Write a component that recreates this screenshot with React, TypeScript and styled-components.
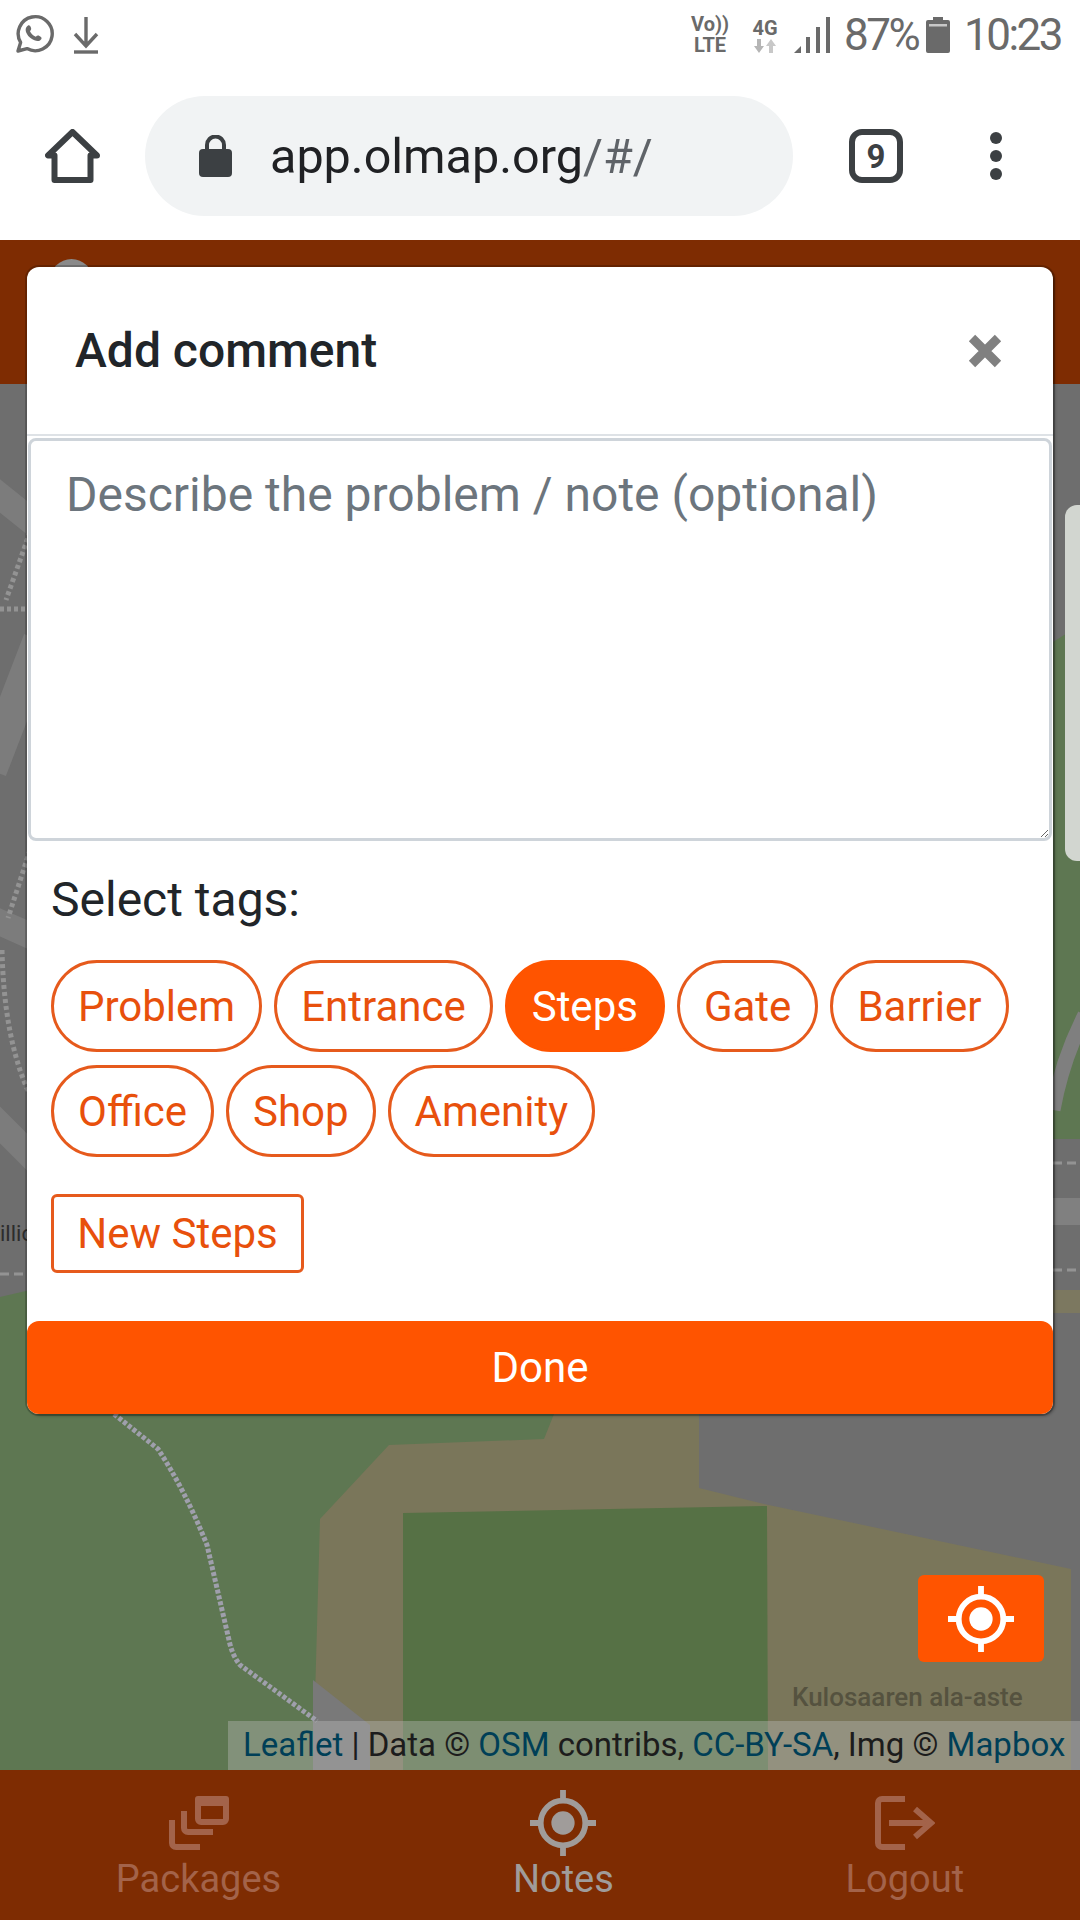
import React from "react";
import styled, {createGlobalStyle} from "styled-components";

const ORANGE = '#ff5400'
const TAGS = ['Problem', 'Entrance', 'Steps', 'Gate', 'Barrier', 'Office', 'Shop', 'Amenity']
const SELECTED_TAG = 'Steps'

const GlobalStyle = createGlobalStyle`
  html, body {
    margin: 0;
    padding: 0;
    background: #fff;
    font-family: Roboto, "Liberation Sans", sans-serif;
  }
  * {
    box-sizing: border-box;
  }
`

const Page = styled.div`
  width: 1080px;
  height: 1920px;
  display: flex;
  flex-direction: column;
  overflow: hidden;
`

const StatusBar = styled.div`
  height: 70px;
  padding: 0 18px 0 13px;
  display: flex;
  align-items: center;
  justify-content: space-between;
  color: #6a6a6a;
`

const StatusGroup = styled.div`
  display: flex;
  align-items: center;
`

const StatusText = styled.span<{$width: number}>`
  font-size: 44px;
  line-height: 70px;
  letter-spacing: -2.5px;
  width: ${props => props.$width}px;
  white-space: nowrap;
`

const NetworkBadge = styled.div<{$width: number; $gapLeft?: number; $gapRight?: number}>`
  width: ${props => props.$width}px;
  margin-left: ${props => props.$gapLeft || 0}px;
  margin-right: ${props => props.$gapRight || 0}px;
  display: flex;
  flex-direction: column;
  align-items: center;
  font-size: 20px;
  font-weight: 700;
  line-height: 21px;
  color: #6a6a6a;
`

const BrowserBar = styled.div`
  height: 170px;
  padding: 26px 0 24px 45px;
  display: flex;
  align-items: center;
`

const UrlPill = styled.div`
  width: 648px;
  height: 120px;
  margin-left: 45px;
  padding-left: 54px;
  border-radius: 60px;
  background: #f1f3f4;
  display: flex;
  align-items: center;
  gap: 38px;
`

const UrlText = styled.div`
  font-size: 48.5px;
  color: #202124;
  white-space: nowrap;
`

const UrlPath = styled.span`
  color: #5f6368;
`

const TabCount = styled.div`
  width: 54px;
  height: 54px;
  margin-left: 56px;
  border: 6px solid #3c4043;
  border-radius: 13px;
  display: flex;
  align-items: center;
  justify-content: center;
  font-size: 33px;
  font-weight: 700;
  color: #3c4043;
`

const MenuDots = styled.div`
  margin-left: 87px;
  display: flex;
  flex-direction: column;
  gap: 6px;
`

const MenuDot = styled.div`
  width: 12px;
  height: 12px;
  border-radius: 50%;
  background: #3c4043;
`

const AppShell = styled.div`
  position: relative;
  flex: 1;
  display: flex;
  flex-direction: column;
`

const AppHeader = styled.div`
  height: 144px;
  padding: 19px 0 0 50px;
  background: #7e2c02;
`

const Avatar = styled.div`
  width: 43px;
  height: 43px;
  border-radius: 50%;
  background: #8a8a8a;
`

const MapArea = styled.div`
  position: relative;
  flex: 1;
  background: #6e6e6e;
  overflow: hidden;
`

const MapCanvas = styled.svg`
  position: absolute;
  inset: 0;
  display: block;
`

const SidePanel = styled.div`
  position: absolute;
  top: 121px;
  right: -20px;
  width: 35px;
  height: 356px;
  border-radius: 12px;
  background: #d2d6d0;
`

const LocateButton = styled.div`
  position: absolute;
  right: 36px;
  bottom: 108px;
  width: 126px;
  height: 87px;
  border-radius: 6px;
  background: ${ORANGE};
  display: flex;
  align-items: center;
  justify-content: center;
`

const Attribution = styled.div`
  position: absolute;
  right: 0;
  bottom: 0;
  width: 852px;
  height: 49px;
  padding-left: 15px;
  background: rgba(190, 190, 190, 0.38);
  font-size: 33px;
  line-height: 47px;
  color: #1c1c1c;
  white-space: nowrap;
`

const AttributionLink = styled.span`
  color: #003f57;
`

const AppFooter = styled.div`
  height: 150px;
  background: #7e2c02;
  display: flex;
  justify-content: space-around;
  align-items: flex-start;
  padding-top: 19px;
`

const FooterItem = styled.div<{$active?: boolean}>`
  display: flex;
  flex-direction: column;
  align-items: center;
  font-size: 38px;
  line-height: 44px;
  color: ${props => props.$active ? '#a09c9a' : '#a3634a'};
`

const FooterIconSlot = styled.div`
  height: 68px;
  display: flex;
  align-items: center;
`

const Modal = styled.div`
  position: absolute;
  top: 27px;
  left: 27px;
  width: 1026px;
  height: 1147px;
  background: #fff;
  border-radius: 12px;
  box-shadow: 0 0 0 2px rgba(0, 0, 0, 0.2), 2px 2px 3px rgba(0, 0, 0, 0.3);
  display: flex;
  flex-direction: column;
`

const ModalHeader = styled.div`
  height: 169px;
  padding: 0 51px 0 48px;
  border-bottom: 2px solid #dee2e6;
  display: flex;
  align-items: center;
  justify-content: space-between;
`

const ModalTitle = styled.div`
  font-size: 48px;
  font-weight: 500;
  color: #212529;
`

const CommentBox = styled.textarea`
  display: block;
  width: 1024px;
  height: 403px;
  margin: 2px 1px 0;
  padding: 24px 35px;
  border: 3px solid #ced4da;
  border-radius: 8px;
  font-family: Roboto, "Liberation Sans", sans-serif;
  font-size: 48px;
  line-height: 60px;
  outline: none;

  &::placeholder {
    color: #6c757d;
    opacity: 1;
  }
`

const ModalBody = styled.div`
  flex: 1;
  padding: 31px 24px 0;
`

const TagsLabel = styled.div`
  font-size: 48px;
  line-height: 56px;
  color: #212529;
`

const TagList = styled.div`
  margin-top: 32px;
  display: flex;
  flex-wrap: wrap;
  gap: 13px 12px;
  width: 980px;
`

const TagChip = styled.div<{$selected: boolean}>`
  height: 92px;
  padding: 0 24px;
  border: 3px solid #e65a1c;
  border-radius: 46px;
  display: flex;
  align-items: center;
  font-size: 42px;
  color: ${props => props.$selected ? '#fff' : '#e8500c'};
  background: ${props => props.$selected ? ORANGE : 'transparent'};
  ${props => props.$selected && `border-color: ${ORANGE};`}
`

const NewTagButton = styled.div`
  width: 253px;
  height: 79px;
  margin-top: 37px;
  border: 3px solid #e65a1c;
  border-radius: 6px;
  display: flex;
  align-items: center;
  justify-content: center;
  font-size: 42px;
  color: #e8500c;
`

const DoneButton = styled.div`
  height: 93px;
  border-radius: 12px;
  background: ${ORANGE};
  display: flex;
  align-items: center;
  justify-content: center;
  font-size: 42px;
  color: #fff;
`

const WhatsappIcon = () => (
  <svg width="42" height="42" viewBox="0 0 42 42" fill="none">
    <path d="M5 37l2.6-8.6A17 17 0 1 1 14 34.6z" stroke="#6a6a6a" strokeWidth="3.4" strokeLinejoin="round" />
    <path d="M13.5 13c2-2.6 3.4-2 4.4.6.6 1.6.2 2.4-.9 3.6 1.2 2.6 3 4.4 5.8 5.6 1.2-1.2 2.2-1.6 3.6-.8 2.6 1.4 3 2.6.6 4.4-2 1.4-5.6.6-8.8-1.8-4.4-3.2-7-8.4-4.7-11.6z" fill="#6a6a6a" />
  </svg>
)

const DownloadIcon = () => (
  <svg width="28" height="38" viewBox="0 0 28 38" fill="none" style={{marginLeft: 17}}>
    <path d="M14 1v29M3 18l11 12 11-12" stroke="#6a6a6a" strokeWidth="3.4" />
    <path d="M2 36h24" stroke="#6a6a6a" strokeWidth="3.4" />
  </svg>
)

const SignalIcon = () => (
  <svg width="36" height="36" viewBox="0 0 36 36" style={{marginRight: 14}}>
    <path d="M0 36l7-7v7z" fill="#6a6a6a" />
    <rect x="12" y="20" width="4" height="16" fill="#6a6a6a" />
    <rect x="22" y="10" width="4" height="26" fill="#6a6a6a" />
    <rect x="32" y="0" width="4" height="36" fill="#6a6a6a" />
  </svg>
)

const BatteryIcon = () => (
  <svg width="24" height="36" viewBox="0 0 24 36" style={{marginRight: 14}}>
    <path d="M7 0h10v3h5a2 2 0 0 1 2 2v29a2 2 0 0 1-2 2H2a2 2 0 0 1-2-2V5a2 2 0 0 1 2-2h5z" fill="#6a6a6a" />
    <rect x="3" y="7" width="18" height="2.500" fill="#c8c8c8" />
  </svg>
)

const DataArrows = () => (
  <svg width="22" height="14" viewBox="0 0 22 14">
    <path d="M5 14L0 7h3V0h4v7h3z" fill="#b5b5b5" />
    <path d="M17 0l5 7h-3v7h-4V7h-3z" fill="#c8c8c8" />
  </svg>
)

const HomeIcon = () => (
  <svg width="55" height="54" viewBox="0 0 55 54" fill="none">
    <path d="M27.500 3L3 26.500h6.500V51h36V26.500H52z" stroke="#3c4043" strokeWidth="6" strokeLinejoin="round" />
  </svg>
)

const LockIcon = () => (
  <svg width="33" height="42" viewBox="0 0 33 42" style={{flexShrink: 0}}>
    <path d="M8 16v-6a8.500 8.500 0 0 1 17 0v6" fill="none" stroke="#3c4043" strokeWidth="4" />
    <rect x="0" y="14" width="33" height="28" rx="4" fill="#3c4043" />
  </svg>
)

const CloseIcon = () => (
  <svg width="34" height="34" viewBox="0 0 34 34">
    <path d="M4 4l26 26M30 4L4 30" stroke="#808080" strokeWidth="9" />
  </svg>
)

const TargetIcon: React.FC<{color: string}> = ({color}) => (
  <svg width="66" height="66" viewBox="0 0 68 68" fill="none">
    <circle cx="34" cy="34" r="23" stroke={color} strokeWidth="6" />
    <circle cx="34" cy="34" r="12" fill={color} />
    <path d="M34 0v12M34 56v12M0 34h12M56 34h12" stroke={color} strokeWidth="6" />
  </svg>
)

const PackagesIcon = () => (
  <svg width="60" height="54" viewBox="0 0 60 54" fill="none" stroke="#a3634a" strokeWidth="6">
    <rect x="29" y="3" width="28" height="23" rx="3" fill="none" />
    <rect x="26" y="0" width="34" height="10" rx="3" fill="#a3634a" stroke="none" />
    <path d="M15 15v17a4 4 0 0 0 4 4h25" />
    <path d="M3 24v23a4 4 0 0 0 4 4h24" />
  </svg>
)

const LogoutIcon = () => (
  <svg width="60" height="54" viewBox="0 0 60 54" fill="none" stroke="#a3634a" strokeWidth="6">
    <path d="M30 3H7a4 4 0 0 0-4 4v40a4 4 0 0 0 4 4h23" />
    <path d="M14 27h38" />
    <path d="M40 13l16 14-16 14" />
  </svg>
)

// map coordinates are page pixels, the canvas starts at y=384
const MapDrawing = () => (
  <MapCanvas width="1080" height="1386" viewBox="0 384 1080 1386">
    <path d="M-10 488L40 528M-10 1115L40 1165M-10 918L40 940" stroke="#7c7c7c" strokeWidth="26" fill="none" />
    <path d="M-10 770L40 640" stroke="#7c7c7c" strokeWidth="34" fill="none" />
    <path d="M30 532L6 600M0 609H30M30 850L8 918M2 950Q4 1040 30 1095" stroke="#939393" strokeWidth="5" strokeDasharray="4 3" fill="none" />
    <path d="M0 1274H30" stroke="#939393" strokeWidth="3" strokeDasharray="9 5" fill="none" />

    <path d="M0 1297L30 1290V1400L320 1414H720V1770H0z" fill="#5e7752" />
    <path d="M1053 642L1080 625V1139H1053z" fill="#5e7752" />
    <path d="M554 1414L544 1439 389 1445 320 1519 313 1770H1080V1414z" fill="#7a765a" />
    <path d="M699 1410V1488L764 1504 1071 1569V1770H1080V1410z" fill="#6e6e6e" />
    <path d="M403 1513L767 1506 768 1770H403z" fill="#567145" />
    <path d="M313 1680L370 1725V1770H313z" fill="#797979" />
    <path d="M114 1414L158 1449Q185 1490 207 1545L229 1640Q232 1655 240 1665L317 1721" fill="none" stroke="#9f9fac" strokeWidth="5" strokeDasharray="4 2" />

    <path d="M1053 1110Q1062 1060 1085 1015" stroke="#7f7f7f" strokeWidth="15" fill="none" />
    <rect x="1053" y="1198" width="27" height="27" fill="#808080" />
    <path d="M1053 1163H1080M1053 1270H1080" stroke="#939393" strokeWidth="3" strokeDasharray="9 5" fill="none" />
    <rect x="1053" y="1290" width="27" height="23" fill="#7c7860" />
    <text x="0" y="1241" fontFamily="Roboto, sans-serif" fontSize="22" fill="#2c2c2c">illic</text>
    <text x="792" y="1706" fontFamily="Roboto, sans-serif" fontSize="26" fontWeight="500" fill="#55523f">Kulosaaren ala-aste</text>
  </MapCanvas>
)

const App: React.FC = () => {
  return (
    <Page>
      <GlobalStyle />
      <StatusBar>
        <StatusGroup>
          <WhatsappIcon />
          <DownloadIcon />
        </StatusGroup>
        <StatusGroup>
          <NetworkBadge $width={40}>
            <span>Vo))</span>
            <span>LTE</span>
          </NetworkBadge>
          <NetworkBadge $width={40} $gapLeft={15} $gapRight={9}>
            <span>4G</span>
            <DataArrows />
          </NetworkBadge>
          <SignalIcon />
          <StatusText $width={82}>87%</StatusText>
          <BatteryIcon />
          <StatusText $width={98}>10:23</StatusText>
        </StatusGroup>
      </StatusBar>

      <BrowserBar>
        <HomeIcon />
        <UrlPill>
          <LockIcon />
          <UrlText>app.olmap.org<UrlPath>/#/</UrlPath></UrlText>
        </UrlPill>
        <TabCount>9</TabCount>
        <MenuDots>
          <MenuDot />
          <MenuDot />
          <MenuDot />
        </MenuDots>
      </BrowserBar>

      <AppShell>
        <AppHeader>
          <Avatar />
        </AppHeader>
        <MapArea>
          <MapDrawing />
          <SidePanel />
          <LocateButton>
            <TargetIcon color="#fff" />
          </LocateButton>
          <Attribution>
            <AttributionLink>Leaflet</AttributionLink> | Data © <AttributionLink>OSM</AttributionLink> contribs, <AttributionLink>CC-BY-SA</AttributionLink>, Img © <AttributionLink>Mapbox</AttributionLink>
          </Attribution>
        </MapArea>
        <AppFooter>
          <FooterItem>
            <FooterIconSlot><PackagesIcon /></FooterIconSlot>
            Packages
          </FooterItem>
          <FooterItem $active>
            <FooterIconSlot><TargetIcon color="#a09c9a" /></FooterIconSlot>
            Notes
          </FooterItem>
          <FooterItem>
            <FooterIconSlot><LogoutIcon /></FooterIconSlot>
            Logout
          </FooterItem>
        </AppFooter>

        <Modal>
          <ModalHeader>
            <ModalTitle>Add comment</ModalTitle>
            <CloseIcon />
          </ModalHeader>
          <CommentBox placeholder="Describe the problem / note (optional)" />
          <ModalBody>
            <TagsLabel>Select tags:</TagsLabel>
            <TagList>
              {TAGS.map(tag => (
                <TagChip key={tag} $selected={tag === SELECTED_TAG}>{tag}</TagChip>
              ))}
            </TagList>
            <NewTagButton>New Steps</NewTagButton>
          </ModalBody>
          <DoneButton>Done</DoneButton>
        </Modal>
      </AppShell>
    </Page>
  )
}

export default App;
